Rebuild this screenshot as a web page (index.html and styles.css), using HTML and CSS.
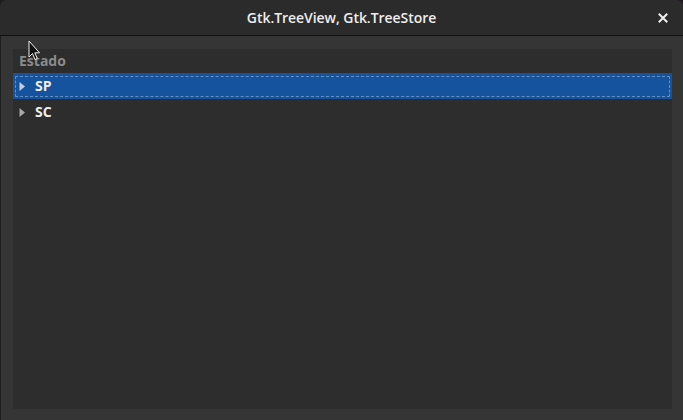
FILE: index.html
```html
<!DOCTYPE html>
<html>
<head>
<meta charset="utf-8">
<link rel="stylesheet" href="styles.css">
</head>
<body>
<div class="window">
  <header class="titlebar">
    <span class="title">Gtk.TreeView, Gtk.TreeStore</span>
    <span class="close">
      <svg width="10" height="10" viewBox="0 0 10 10"><path d="M1.5 1.5 L8.5 8.5 M8.5 1.5 L1.5 8.5" stroke="#eeeeec" stroke-width="2" stroke-linecap="square"/></svg>
    </span>
  </header>
  <main class="content">
    <div class="tree">
      <div class="col-header">Estado</div>
      <div class="row selected">
        <span class="expander"><svg width="7" height="11" viewBox="0 0 7 11"><path d="M0.5 1 L6 5.5 L0.5 10 Z" fill="#c3cfe0"/></svg></span>
        <span class="label">SP</span>
      </div>
      <div class="row">
        <span class="expander"><svg width="7" height="11" viewBox="0 0 7 11"><path d="M0.5 1 L6 5.5 L0.5 10 Z" fill="#a8a8a8"/></svg></span>
        <span class="label">SC</span>
      </div>
    </div>
  </main>
  <svg class="cursor" width="14" height="22" viewBox="0 0 14 22"><path d="M1 1 L1 17 L4.5 13.5 L7 19.5 L9.3 18.5 L6.8 12.8 L11.5 12.8 Z" fill="#111" stroke="#eee" stroke-width="1"/></svg>
</div>
</body>
</html>
```

FILE: styles.css
```css
html, body {
  margin: 0;
  padding: 0;
  background: #1f1a20;
}
body {
  width: 683px;
  height: 420px;
  overflow: hidden;
  font-family: "Open Sans", "Noto Sans", sans-serif;
}
.window {
  position: relative;
  width: 683px;
  height: 420px;
  display: flex;
  flex-direction: column;
  background: #353535;
  border-radius: 7px 7px 0 0;
  overflow: hidden;
  box-shadow: inset 1px 0 0 #1e1e1e;
}
.titlebar {
  height: 35px;
  flex: none;
  background: #2b2b2b;
  border-bottom: 1px solid #111111;
  display: flex;
  align-items: center;
  justify-content: center;
  position: relative;
}
.title {
  color: #eeeeec;
  font-size: 14px;
  font-weight: 600;
  letter-spacing: -0.05px;
}
.close {
  position: absolute;
  right: 15px;
  top: 13px;
  width: 10px;
  height: 10px;
  display: flex;
}
.content {
  flex: 1;
  padding: 13px 11px 11px 13px;
  display: flex;
}
.tree {
  flex: 1;
  background: #2d2d2d;
  display: flex;
  flex-direction: column;
}
.col-header {
  height: 24px;
  line-height: 24px;
  padding-left: 6px;
  color: #8b8b8b;
  font-size: 14px;
  font-weight: 700;
}
.row {
  height: 26px;
  display: flex;
  align-items: center;
  color: #eeeeec;
  font-size: 14px;
  font-weight: 700;
}
.row.selected {
  background: #15539e;
  position: relative;
}
.row.selected::after {
  content: "";
  position: absolute;
  left: 2px;
  right: 2px;
  top: 3px;
  bottom: 2px;
  border: 1px dashed rgba(255,255,255,0.35);
  border-radius: 1px;
}
.expander {
  width: 7px;
  height: 11px;
  margin-left: 6px;
  margin-right: 9px;
  display: flex;
}
.label {
  line-height: 1;
}
.cursor {
  position: absolute;
  left: 28px;
  top: 40px;
}
```
